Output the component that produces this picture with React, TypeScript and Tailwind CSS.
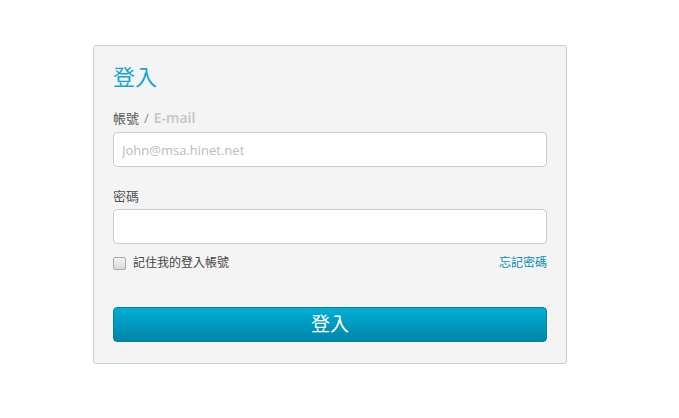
export default function App() {
  return (
    <div className="min-h-[418px] bg-white pt-[45px] pl-[93px]" style={{ fontFamily: '"Open Sans", "Noto Sans CJK TC", sans-serif' }}>
      <div className="w-[474px] rounded-[3px] border border-[#cccccc] bg-[#f4f4f4] px-[19px] pt-[15px] pb-[21px]">
        <h1 className="text-[22px] leading-[30px] text-[#14a5d3]">登入</h1>

        <label className="mt-[18px] mb-[5px] flex items-center text-[13px] leading-[18px] text-[#555555]">
          帳號<span className="mx-[5px] text-[#888888]">/</span><span className="text-[14px] font-semibold text-[#c4c4c4]">E-mail</span>
        </label>
        <input
          type="text"
          placeholder="John@msa.hinet.net"
          className="block h-[35px] w-full rounded-[4px] border border-[#cccccc] bg-white px-[8px] text-[13px] text-[#555] outline-none placeholder:text-[#bbbbbb]"
        />

        <label className="mt-[20px] mb-[4px] block text-[13px] leading-[18px] text-[#555555]">密碼</label>
        <input
          type="password"
          className="block h-[35px] w-full rounded-[4px] border border-[#cccccc] bg-white px-[8px] text-[13px] outline-none"
        />

        <div className="mt-[10px] flex items-center justify-between text-[12px] leading-[18px]">
          <label className="flex items-center gap-[7px] text-[#444444]">
            <span className="inline-block h-[13px] w-[13px] rounded-[2px] border border-[#a9a9a9] bg-gradient-to-b from-[#f4f4f4] to-[#d8d8d8]" />
            記住我的登入帳號
          </label>
          <a className="text-[#0a8fb0]" href="#">忘記密碼</a>
        </div>

        <button className="mt-[35px] block h-[35px] w-full rounded-[4px] border border-[#0a7fa0] bg-gradient-to-b from-[#00afd6] to-[#0085a9] text-[19px] text-white">
          登入
        </button>
      </div>
    </div>
  );
}
